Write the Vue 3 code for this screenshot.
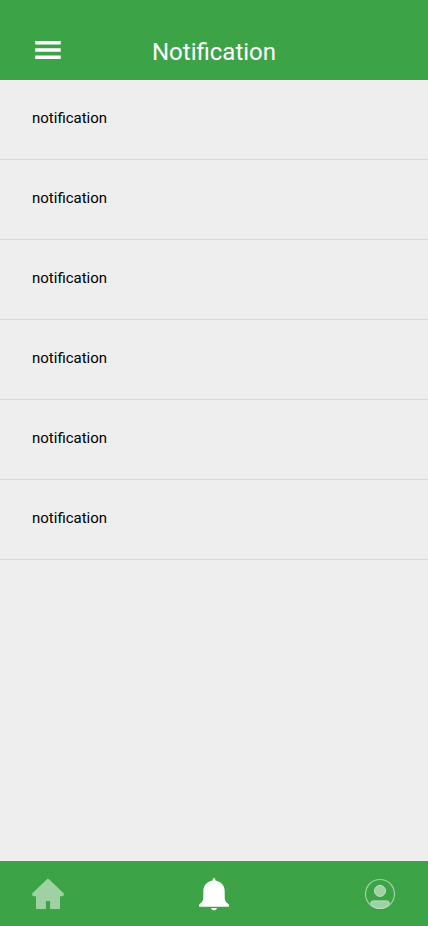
<script setup>
const notifications = Array.from({ length: 6 }, (_, id) => ({ id, text: 'notification' }))
</script>

<template>
  <div class="screen">
    <header class="header">
      <button class="icon-button menu" aria-label="Menu">
        <svg width="26" height="18" viewBox="0 0 26 18" fill="#fff">
          <path d="M.2 0h25.5v3.6H.2zM.2 7.2h25.5v3.6H.2zM.2 14.4h25.5V18H.2z" />
        </svg>
      </button>
      <h1 class="title">Notification</h1>
    </header>
    <main class="content">
      <ul class="list">
        <li v-for="item in notifications" :key="item.id" class="item">{{ item.text }}</li>
      </ul>
    </main>
    <nav class="tabs">
      <button class="icon-button" aria-label="Home">
        <svg width="32" height="32" viewBox="0 0 32 32" fill="#9ed1a4">
          <path d="M16 .8c-.5 0-.9.2-1.3.6L.6 15.1c-.6.6-.7 1.4-.3 2.1.4.7 1.2 1.1 2.1 1.1H4v12.6h9.9v-8h4.2v8H28V18.3h1.6c.9 0 1.7-.4 2.1-1.1.4-.7.3-1.5-.3-2.1L17.3 1.4c-.4-.4-.8-.6-1.3-.6z" />
        </svg>
      </button>
      <button class="icon-button" aria-label="Notifications">
        <svg width="32" height="34" viewBox="0 0 32 34" fill="#fff">
          <path d="M16 1c.8 0 1.3.7 1.3 1.8v.7c5.4.8 9.4 4.9 9.4 10.7v6.1c0 3.2 1 4.7 2.8 5.9 1 .7 1.5 1.1 1.5 2.1v1.5H1v-1.5c0-1 .5-1.4 1.5-2.1 1.8-1.2 2.8-2.7 2.8-5.9v-6.1c0-5.8 4-9.9 9.4-10.7v-.7C14.7 1.7 15.2 1 16 1zM13 31h6c-.3 1.4-1.5 2.3-3 2.3s-2.7-.9-3-2.3z" />
        </svg>
      </button>
      <button class="icon-button" aria-label="Profile">
        <svg width="32" height="32" viewBox="0 0 32 32" fill="#9ed1a4">
          <circle cx="16" cy="16" r="14.5" fill="none" stroke="#9ed1a4" stroke-width="1.2" />
          <circle cx="16" cy="12.9" r="5.5" stroke="#c4e4c8" stroke-width="1" />
          <path d="M6.8 26.3c-.2-2.4.7-3.4 2.8-3.4h12.8c2.1 0 3 1 2.8 3.4-2.4 2.7-5.5 4.2-9.2 4.2s-6.8-1.5-9.2-4.2z" stroke="#c4e4c8" stroke-width=".9" />
        </svg>
      </button>
    </nav>
  </div>
</template>

<style>
body {
  margin: 0;
}
</style>

<style scoped>
.screen {
  display: flex;
  flex-direction: column;
  height: 926px;
  background: #eee;
  font-family: Roboto, sans-serif;
}
.header {
  display: grid;
  grid-template-columns: 80px 1fr 80px;
  align-items: end;
  height: 80px;
  box-sizing: border-box;
  padding-bottom: 14px;
  background: #3ca447;
}
.icon-button {
  display: flex;
  padding: 0;
  border: 0;
  background: none;
}
.menu {
  margin: 0 0 7px 35px;
}
.title {
  margin: 0;
  color: #fff;
  font-size: 24px;
  font-weight: 400;
  line-height: 28px;
  text-align: center;
}
.content {
  flex: 1;
}
.list {
  margin: 0;
  padding: 0;
  list-style: none;
}
.item {
  box-sizing: border-box;
  height: 80px;
  padding: 29px 32px 0;
  border-bottom: 1px solid #d8d8d8;
  color: #000;
  font-size: 15px;
  line-height: 18px;
}
.tabs {
  display: flex;
  align-items: center;
  justify-content: space-between;
  height: 65px;
  box-sizing: border-box;
  padding: 0 32px;
  background: #3ca447;
}
</style>
